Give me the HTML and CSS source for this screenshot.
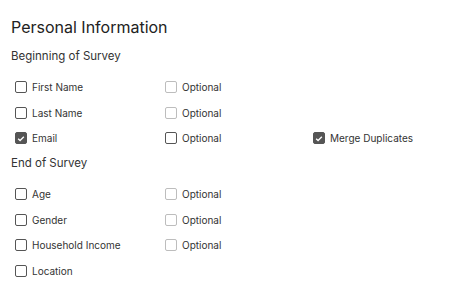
FILE: index.html
```html
<!DOCTYPE html>
<html lang="en">
<head>
  <meta charset="UTF-8">
  <title>Personal Information</title>
  <link rel="stylesheet" href="styles.css">
</head>
<body>
  <div class="panel">
    <h1 class="title">Personal Information</h1>

    <h2 class="section">Beginning of Survey</h2>
    <div class="rows">
      <label class="field"><span class="box"></span>First Name</label>
      <label class="field"><span class="box disabled"></span>Optional</label>
      <span></span>

      <label class="field"><span class="box"></span>Last Name</label>
      <label class="field"><span class="box disabled"></span>Optional</label>
      <span></span>

      <label class="field"><span class="box checked"><svg viewBox="0 0 12 12"><path d="M2.6 6.2l2.3 2.3 4.5-4.7"/></svg></span>Email</label>
      <label class="field"><span class="box"></span>Optional</label>
      <label class="field"><span class="box checked"><svg viewBox="0 0 12 12"><path d="M2.6 6.2l2.3 2.3 4.5-4.7"/></svg></span>Merge Duplicates</label>
    </div>

    <h2 class="section">End of Survey</h2>
    <div class="rows">
      <label class="field"><span class="box"></span>Age</label>
      <label class="field"><span class="box disabled"></span>Optional</label>
      <span></span>

      <label class="field"><span class="box"></span>Gender</label>
      <label class="field"><span class="box disabled"></span>Optional</label>
      <span></span>

      <label class="field"><span class="box"></span>Household Income</label>
      <label class="field"><span class="box disabled"></span>Optional</label>
      <span></span>

      <label class="field"><span class="box"></span>Location</label>
    </div>
  </div>
</body>
</html>
```

FILE: styles.css
```css
* {
  margin: 0;
  padding: 0;
  box-sizing: border-box;
}
html, body {
  background: #fff;
  font-family: 'Inter', 'Liberation Sans', sans-serif;
  color: #333;
}

.panel {
  padding: 17px 11px 0 11px;
}

.title {
  font-size: 16px;
  font-weight: 400;
  line-height: 20px;
  margin-bottom: 11px;
  color: #222;
}

.section {
  font-size: 11.5px;
  font-weight: 400;
  line-height: 16px;
  color: #333;
}

.rows {
  display: grid;
  grid-template-columns: 150px 148px 1fr;
  row-gap: 9.5px;
  padding: 15px 0 9px 4px;
}

.field {
  display: flex;
  align-items: center;
  gap: 5px;
  font-size: 10px;
  line-height: 16px;
  color: #333;
}

.box {
  width: 12px;
  height: 12px;
  border: 1.5px solid #555;
  border-radius: 2px;
  flex-shrink: 0;
  display: flex;
  align-items: center;
  justify-content: center;
}
.box.disabled {
  border-color: #bdbdbd;
}
.box.checked {
  background: #555;
  border-color: #555;
}
.box svg {
  width: 11px;
  height: 11px;
  fill: none;
  stroke: #fff;
  stroke-width: 1.6;
}
```
